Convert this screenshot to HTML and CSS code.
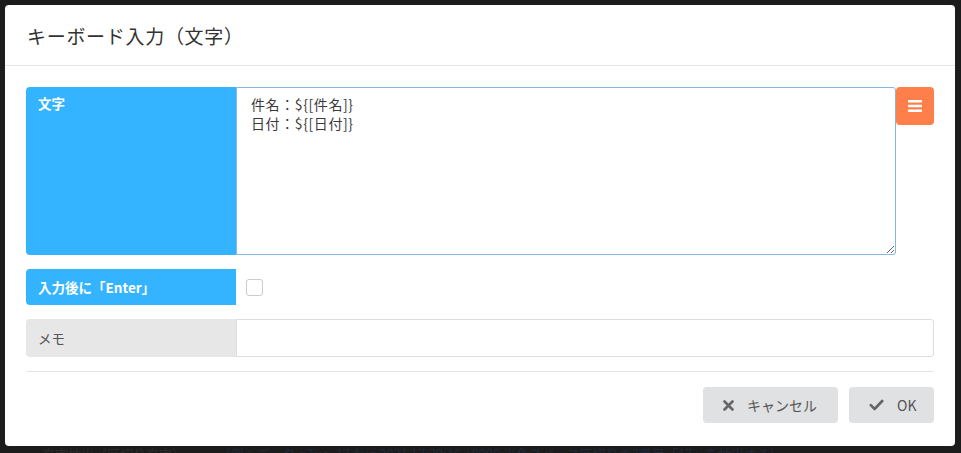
FILE: index.html
```html
<!DOCTYPE html>
<html lang="ja">
<head>
    <meta charset="UTF-8">
    <meta name="viewport" content="width=device-width, initial-scale=1.0">
    <title>キーボード入力（文字）</title>
    <link rel="stylesheet" href="styles.css">
</head>
<body>

<div class="modal">
    <div class="modal-header">
        <h4 class="modal-title">キーボード入力（文字）</h4>
    </div>

    <div class="modal-body">
        <div class="form-row row-text">
            <div class="label label-blue">文字</div>
            <textarea class="text-input">件名：${[件名]}
日付：${[日付]}</textarea>
            <button class="menu-btn" title="変数">
                <svg width="14" height="12" viewBox="0 0 14 12">
                    <rect x="0" y="0" width="14" height="2.4" rx="0.6" fill="#fff"/>
                    <rect x="0" y="4.8" width="14" height="2.4" rx="0.6" fill="#fff"/>
                    <rect x="0" y="9.6" width="14" height="2.4" rx="0.6" fill="#fff"/>
                </svg>
            </button>
        </div>

        <div class="form-row row-enter">
            <div class="label label-blue">入力後に「Enter」</div>
            <label class="check-wrap"><input type="checkbox" class="check"></label>
        </div>

        <div class="form-row row-memo">
            <div class="label label-grey">メモ</div>
            <input type="text" class="memo-input">
        </div>
    </div>

    <div class="modal-footer">
        <button class="btn btn-cancel">
            <svg width="11" height="11" viewBox="0 0 11 11">
                <path d="M1.5 1.5 L9.5 9.5 M9.5 1.5 L1.5 9.5" stroke="#666" stroke-width="2.6" stroke-linecap="round"/>
            </svg>
            キャンセル
        </button>
        <button class="btn btn-ok">
            <svg width="15" height="12" viewBox="0 0 15 12">
                <path d="M1.8 6.2 L5.6 10 L13.2 2" stroke="#666" stroke-width="2.6" fill="none" stroke-linecap="round" stroke-linejoin="round"/>
            </svg>
            OK
        </button>
    </div>
</div>

<div class="behind">
    <span class="behind-name">文字抽出（区切り文字）</span>
    <span class="behind-desc">(例：データ-&gt;Tue, 17 Aug 2021 17:39:16 +0000 半角スペース区切りの3番目「17」を抽出する)</span>
</div>

</body>
</html>
```

FILE: styles.css
```css
html, body {
    margin: 0;
    padding: 0;
}

body {
    background-color: #1c1c1c;
    font-family: "Noto Sans CJK JP", "Noto Sans", "Liberation Sans", sans-serif;
    color: #333;
    height: 453px;
    overflow: hidden;
}

.modal {
    margin: 5px 6px 0 5px;
    width: 950px;
    height: 441px;
    background: #fff;
    border-radius: 4px;
    box-sizing: border-box;
}

.modal-header {
    height: 61px;
    box-sizing: border-box;
    border-bottom: 1px solid #e5e5e5;
    display: flex;
    align-items: center;
    padding: 0 22px;
}

.modal-title {
    margin: 0;
    font-size: 19px;
    font-weight: normal;
    color: #333;
    letter-spacing: 0.7px;
}

.modal-body {
    padding: 21px 0 14px 0;
    margin: 0 21px;
    display: flex;
    flex-direction: column;
    gap: 14px;
    border-bottom: 1px solid #e5e5e5;
}

.form-row {
    display: flex;
    align-items: stretch;
}

.label {
    width: 210px;
    flex: none;
    box-sizing: border-box;
    padding: 0 12px;
    font-size: 13.5px;
    border-radius: 4px 0 0 4px;
}

.label-blue {
    background: #34b4ff;
    color: #fff;
    font-weight: bold;
}

.label-grey {
    background: #e7e7e7;
    color: #555;
}

.row-text {
    height: 168px;
}

.row-text .label {
    padding-top: 6px;
}

.text-input {
    flex: 1;
    margin: 0;
    box-sizing: border-box;
    border: 1px solid #86b7e0;
    border-radius: 0 3px 3px 0;
    padding: 7px 14px;
    font-family: "Noto Sans CJK JP", "Noto Sans", sans-serif;
    font-size: 14px;
    line-height: 19px;
    letter-spacing: 0.6px;
    color: #3a3a3a;
    resize: vertical;
    outline: none;
}

.menu-btn {
    flex: none;
    width: 38px;
    height: 38px;
    border: none;
    border-radius: 4px;
    background: #ff7f4b;
    display: flex;
    align-items: center;
    justify-content: center;
    padding: 0;
    cursor: pointer;
}

.row-enter {
    height: 36px;
}

.row-enter .label,
.row-memo .label {
    display: flex;
    align-items: center;
}

.check-wrap {
    display: flex;
    align-items: center;
    padding-left: 10px;
}

.check {
    appearance: none;
    -webkit-appearance: none;
    margin: 0;
    width: 17px;
    height: 17px;
    border: 1px solid #ccc;
    border-radius: 3px;
    background: #fff;
}

.row-memo {
    height: 38px;
}

.memo-input {
    flex: 1;
    margin: 0;
    box-sizing: border-box;
    border: 1px solid #ddd;
    border-radius: 0 3px 3px 0;
    padding: 0 12px;
    font-size: 13px;
    outline: none;
}

.modal-footer {
    display: flex;
    justify-content: flex-end;
    gap: 11px;
    padding: 15px 21px 0 21px;
}

.btn {
    height: 36px;
    border: none;
    border-radius: 4px;
    background: #e0e1e2;
    color: #555;
    font-family: "Noto Sans CJK JP", "Noto Sans", sans-serif;
    font-size: 14px;
    display: flex;
    align-items: center;
    gap: 13px;
    padding: 0 0 0 20px;
    cursor: pointer;
}

.btn-cancel {
    width: 135px;
}

.btn-ok {
    width: 85px;
}

.behind {
    margin: 1px 0 0 42px;
    font-size: 13px;
    line-height: 14px;
    color: #2a2a2a;
    white-space: nowrap;
}

.behind-desc {
    margin-left: 38px;
    color: #1e2a3c;
}
```
